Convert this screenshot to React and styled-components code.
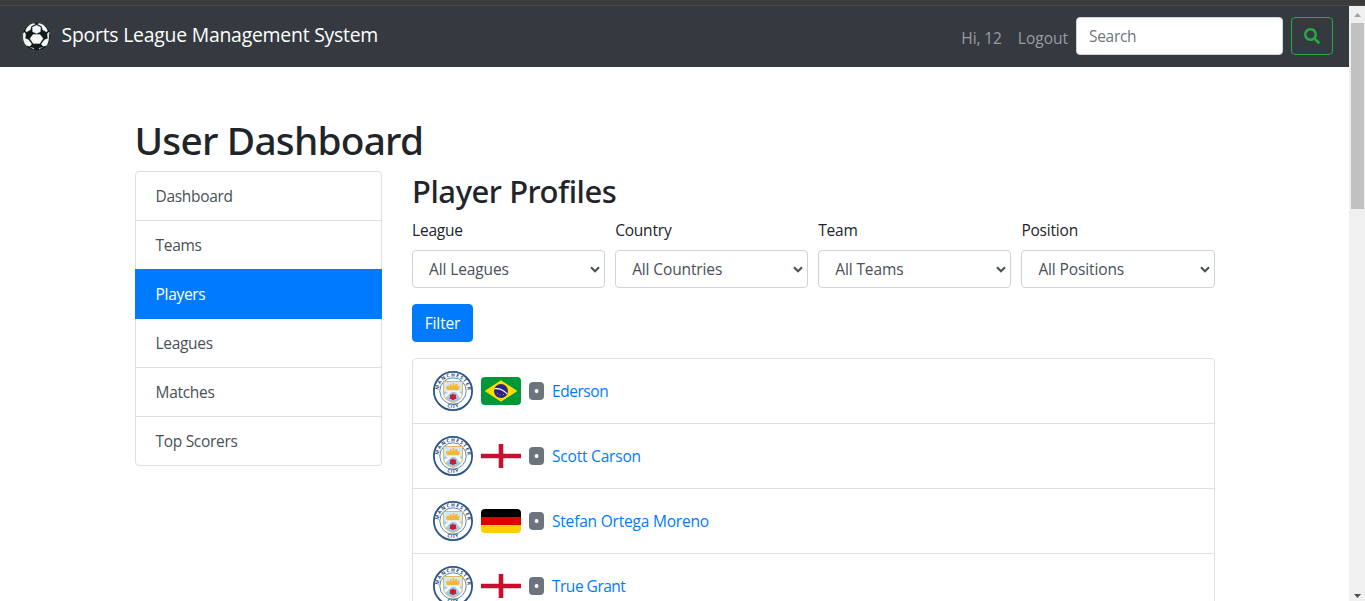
import React from "react";
import styled, { createGlobalStyle } from "styled-components";

const GlobalStyle = createGlobalStyle`
  *, *::before, *::after { box-sizing: border-box; }
  body {
    margin: 0;
    height: 601px;
    overflow: hidden;
    background: #fff;
    color: #212529;
    font-family: "Open Sans", "Noto Sans", sans-serif;
    font-size: 15.5px;
    line-height: 24px;
  }
  a { color: inherit; text-decoration: none; }
`;

const Window = styled.div`
  height: 601px;
  display: flex;
  flex-direction: column;
  overflow: hidden;
`;

const TopStrip = styled.div`
  flex: none;
  height: 6px;
  background: #3b3b3b;
  border-bottom: 1px solid #474a4a;
`;

const Viewport = styled.div`
  flex: 1;
  min-height: 0;
  display: flex;
`;

const Page = styled.div`
  flex: 1;
  min-width: 0;
  overflow: hidden;
`;

const Track = styled.div`
  flex: none;
  width: 16px;
  padding: 0 1px 0 2px;
  display: flex;
  flex-direction: column;
  align-items: stretch;
  background: #f0f0f0;
`;

const Arrow = styled.svg`
  display: block;
  width: 13px;
  height: 17px;
`;

const Thumb = styled.div`
  height: 186px;
  margin-bottom: auto;
  background: #c1c1c1;
`;

const Navbar = styled.nav`
  height: 61px;
  padding: 0 16px 1px 21px;
  display: flex;
  align-items: center;
  background: #343a40;
`;

const Brand = styled.a`
  display: flex;
  align-items: center;
  gap: 9.5px;
  margin-right: auto;
  color: #fff;
  font-size: 19.4px;
  letter-spacing: -0.23px;
  line-height: 30px;

  span { margin-top: -2px; }
`;

const BallIcon = styled.svg`
  width: 31px;
  height: 31px;
`;

const NavLink = styled.a`
  padding: 3px 8px 0;
  color: #9a9da0;
  letter-spacing: ${(p) => p.$track || 0}px;
`;

const SearchInput = styled.input`
  width: 207px;
  height: 38px;
  margin-right: 8px;
  padding: 6px 12px;
  border: 1px solid #ced4da;
  border-radius: 4px;
  background: #fff;
  font: inherit;
  letter-spacing: -0.3px;

  &::placeholder { color: #6c757d; opacity: 1; }
`;

const SearchButton = styled.button`
  width: 42px;
  height: 38px;
  padding: 0;
  display: grid;
  place-items: center;
  border: 1px solid #28a745;
  border-radius: 4px;
  background: transparent;
  color: #28a745;

  svg { width: 16px; height: 16px; }
`;

const Container = styled.div`
  width: 1080px;
  margin: 48px auto 0;
`;

const PageTitle = styled.h1`
  height: 48px;
  margin: 0 0 8px;
  padding-top: 1px;
  font: 500 38.8px/48px "Noto Sans", sans-serif;
  letter-spacing: -0.78px;
`;

const Columns = styled.div`
  display: grid;
  grid-template-columns: 247.5px 802.5px;
  gap: 30px;
  align-items: start;
`;

const Menu = styled.div`
  display: flex;
  flex-direction: column;
`;

const MenuItem = styled.a`
  height: 50px;
  padding: 12px 20px;
  border: 1px solid ${(p) => (p.$active ? "#007bff" : "#dfdfdf")};
  background: ${(p) => (p.$active ? "#007bff" : "#fff")};
  color: ${(p) => (p.$active ? "#fff" : "#495057")};
  position: relative;
  z-index: ${(p) => (p.$active ? 1 : 0)};
  letter-spacing: -0.3px;

  & + & { margin-top: -1px; }
  &:first-child { border-radius: 4px 4px 0 0; }
  &:last-child { border-radius: 0 0 4px 4px; }
`;

const SectionTitle = styled.h2`
  margin: 0 0 8px;
  padding-top: 1px;
  font: 500 31px/38.4px "Noto Sans", sans-serif;
  letter-spacing: -0.46px;
`;

const Filters = styled.form`
  display: grid;
  grid-template-columns: repeat(4, 1fr);
  column-gap: 10px;
  margin-bottom: 16px;
`;

const Label = styled.label`
  display: block;
  margin-bottom: 8px;
  letter-spacing: -0.2px;
`;

const SelectBox = styled.div`
  display: grid;
  align-items: center;

  > * { grid-area: 1 / 1; }

  svg {
    justify-self: end;
    width: 10px;
    height: 7px;
    margin-right: 5px;
    pointer-events: none;
  }
`;

const Select = styled.select`
  appearance: none;
  width: 100%;
  height: 38px;
  padding: 6px 16px;
  border: 1px solid #ced4da;
  border-radius: 4px;
  background: #fff;
  color: #495057;
  font: inherit;
  letter-spacing: -0.12px;
`;

const FilterButton = styled.button`
  width: 61px;
  height: 38px;
  margin-bottom: 16px;
  padding: 0;
  display: block;
  border: 1px solid #007bff;
  border-radius: 4px;
  background: #007bff;
  color: #fff;
  font: inherit;
  letter-spacing: -0.15px;
`;

const PlayerList = styled.ul`
  margin: 0;
  padding: 0;
  list-style: none;
  border: 1px solid #dfdfdf;
  border-radius: 4px;
`;

const PlayerRow = styled.li`
  height: 65px;
  padding: 0 20px;
  display: flex;
  align-items: center;
  gap: 8px;
  border-bottom: 1px solid #dfdfdf;
`;

const CrestIcon = styled.svg`
  width: 40px;
  height: 40px;
`;

const Flag = styled.svg`
  width: 40px;
  height: ${(p) => p.$height}px;
  border-radius: ${(p) => p.$radius}px;
`;

const Badge = styled.span`
  width: 15px;
  height: 18px;
  border-radius: 4px;
  background: #6c757d;
  color: #fff;
  font: 700 12px/19px "Open Sans", sans-serif;
  text-align: center;
`;

const PlayerName = styled.a`
  color: #007bff;
  letter-spacing: ${(p) => p.$track}px;
`;

const Ball = () => (
  <BallIcon viewBox="0 0 31 31">
    <circle cx="15.5" cy="15.5" r="14.7" fill="#10191c" stroke="#49555a" strokeWidth=".8" />
    <g fill="#f6f8f8" stroke="#f6f8f8" strokeWidth=".4">
      <path d="M12 13.6h7l3 4-3.2 4.8h-6.6L9 17.6z" />
      <path d="M11.4 6.2l4.1-2 4.1 2-.3 4.6-3.8 1.7-3.8-1.7z" />
      <path d="M10.6 3.1l2-.7 1.7.7-4.1 2.2-.9 3.500-4 2.200-.7-1.600C5.700 6.400 7.900 4.200 10.600 3.100z" />
      <path d="M20.400 3.100l-2-.7-1.700.7 4.100 2.200.9 3.500 4 2.200.7-1.600C25.300 6.400 23.100 4.200 20.400 3.100z" />
      <path d="M2.300 12.200l1-1 1.400 1.900-.6 4.500 3.300 1.200 3.300 4.300-1.800 2.100-3.400-.7C2.700 22 1.600 16.800 2.300 12.200z" />
      <path d="M28.700 12.200l-1-1-1.400 1.900.6 4.500-3.300 1.200-3.300 4.300 1.800 2.100 3.400-.7c1.800-2.500 2.900-7.700 2.200-12.300z" />
    </g>
    <path d="M8.500 26l4.800 1-.5 1.600zM22.500 26l-4.800 1 .5 1.600z" fill="#a9b1b3" />
  </BallIcon>
);

const Crest = ({ id }) => (
  <CrestIcon viewBox="0 0 40 40">
    <defs>
      <path id={`${id}-top`} d="M6.350 24.500A14.350 14.350 0 1 1 33.650 24.500" />
      <path id={`${id}-bottom`} d="M7.500 31.500A17 17 0 0 0 32.500 31.500" />
      <clipPath id={`${id}-shield`}><path d="M10.500 10.500h19v11c0 5.500-4 8.500-9.500 10-5.500-1.500-9.500-4.500-9.500-10z" /></clipPath>
    </defs>
    <circle cx="20" cy="20" r="19.100" fill="#fff" stroke="#2c5585" strokeWidth="1.800" />
    <circle cx="20" cy="20" r="13.200" fill="#fff" stroke="#4c7ba8" strokeWidth=".9" />
    <g clipPath={`url(#${id}-shield)`}>
      <path d="M10 8h20v24H10z" fill="#d4e8f5" />
      <path d="M10 20.500h20V32H10z" fill="#9ccdec" />
      <path d="M10 24.500l6-4h3l-7 7zM22 20.500h3.500l5 4-2 4z" fill="#f5fafc" />
    </g>
    <path d="M10.500 10.500h19v11c0 5.500-4 8.500-9.500 10-5.500-1.500-9.500-4.500-9.500-10z" fill="none" stroke="#dcb964" strokeWidth="1" />
    <path d="M12.800 16l2.300-1.500 1.700 1v-2.500h1.700V15h1v-3h1.700v3l1.500-2h1.800v2.500l2.200-1-.8 4.800H14z" fill="#f6b83a" />
    <path d="M13 20.200h14" stroke="#fff" strokeWidth="1" />
    <path d="M20 22.400l1.200 1.200 2 .2-.3 2 .6 1.900-2 .5-1.500 1.100-1.500-1.100-2-.5.6-1.900-.3-2 2-.2z" fill="#c1203f" />
    <g fill="#264a79" fontFamily="Open Sans, sans-serif" fontWeight="700" fontSize="5" textAnchor="middle">
      <text letterSpacing="1"><textPath href={`#${id}-top`} startOffset="51%">MANCHESTER</textPath></text>
      <text letterSpacing=".3"><textPath href={`#${id}-bottom`} startOffset="50%">CITY</textPath></text>
    </g>
  </CrestIcon>
);

const BrazilFlag = () => (
  <Flag $height={28} $radius={4} viewBox="0 0 40 28">
    <path d="M0 0h40v28H0z" fill="#009739" />
    <path d="M20 3.200L36.400 14 20 24.800 3.600 14z" fill="#fedd00" />
    <circle cx="20" cy="14" r="7" fill="#2b2481" />
    <path d="M13.500 11.700Q21 10.900 26.200 17" fill="none" stroke="#fff" strokeWidth="1.100" />
    <path d="M16 16.500h1M18.500 18h1M22 17.500h1" stroke="#aaa6cc" strokeWidth=".8" />
  </Flag>
);

const EnglandFlag = () => (
  <Flag $height={24} $radius={0} viewBox="0 0 40 24">
    <path d="M0 0h40v24H0z" fill="#fff" />
    <path d="M0 9.700h40v4.600H0zM17.700 0h4.600v24h-4.600z" fill="#c8102e" />
  </Flag>
);

const GermanyFlag = () => (
  <Flag $height={24} $radius={4} viewBox="0 0 40 24">
    <path d="M0 0h40v8H0z" fill="#000" />
    <path d="M0 8h40v8H0z" fill="#d00" />
    <path d="M0 16h40v8H0z" fill="#ffce00" />
  </Flag>
);

const menu = ["Dashboard", "Teams", "Players", "Leagues", "Matches", "Top Scorers"];

const filters = [
  ["League", "All Leagues"],
  ["Country", "All Countries"],
  ["Team", "All Teams"],
  ["Position", "All Positions"],
];

const players = [
  { name: "Ederson", flag: BrazilFlag, track: -0.45 },
  { name: "Scott Carson", flag: EnglandFlag, track: -0.2 },
  { name: "Stefan Ortega Moreno", flag: GermanyFlag, track: -0.2 },
  { name: "True Grant", flag: EnglandFlag, track: -0.5 },
];

export default function App() {
  return (
    <Window>
      <GlobalStyle />
      <TopStrip />
      <Viewport>
        <Page>
          <Navbar>
            <Brand href="#">
              <Ball />
              <span>Sports League Management System</span>
            </Brand>
            <NavLink $track={-0.1}>Hi, 12</NavLink>
            <NavLink $track={0}>Logout</NavLink>
            <SearchInput placeholder="Search" />
            <SearchButton aria-label="Search">
              <svg viewBox="0 0 512 512" fill="currentColor">
                <path d="M505 442.700L405.300 343c-4.500-4.500-10.600-7-17-7H372c27.600-35.300 44-79.700 44-128C416 93.100 322.900 0 208 0S0 93.100 0 208s93.100 208 208 208c48.300 0 92.700-16.400 128-44v16.300c0 6.400 2.500 12.500 7 17l99.700 99.700c9.400 9.400 24.600 9.400 33.900 0l28.300-28.300c9.400-9.400 9.400-24.600.1-34zM208 336c-70.700 0-128-57.200-128-128 0-70.700 57.200-128 128-128 70.700 0 128 57.200 128 128 0 70.700-57.200 128-128 128z" />
              </svg>
            </SearchButton>
          </Navbar>
          <Container>
            <PageTitle>User Dashboard</PageTitle>
            <Columns>
              <Menu>
                {menu.map((item) => (
                  <MenuItem key={item} href="#" $active={item === "Players"}>{item}</MenuItem>
                ))}
              </Menu>
              <main>
                <SectionTitle>Player Profiles</SectionTitle>
                <Filters>
                  {filters.map(([label, value]) => (
                    <div key={label}>
                      <Label>{label}</Label>
                      <SelectBox>
                        <Select><option>{value}</option></Select>
                        <svg viewBox="0 0 10 7">
                          <path d="M1 1.300L5 5.200 9 1.300" fill="none" stroke="#495057" strokeWidth="2.100" />
                        </svg>
                      </SelectBox>
                    </div>
                  ))}
                </Filters>
                <FilterButton>Filter</FilterButton>
                <PlayerList>
                  {players.map(({ name, flag: PlayerFlag, track }, i) => (
                    <PlayerRow key={name}>
                      <Crest id={`crest-${i}`} />
                      <PlayerFlag />
                      <Badge>•</Badge>
                      <PlayerName href="#" $track={track}>{name}</PlayerName>
                    </PlayerRow>
                  ))}
                </PlayerList>
              </main>
            </Columns>
          </Container>
        </Page>
        <Track>
          <Arrow viewBox="0 0 13 17"><path d="M3 11l3.500-4 3.500 4z" fill="#a3a3a3" /></Arrow>
          <Thumb />
          <Arrow viewBox="0 0 13 17"><path d="M3 10l3.500 4 3.500-4z" fill="#505050" /></Arrow>
        </Track>
      </Viewport>
    </Window>
  );
}
